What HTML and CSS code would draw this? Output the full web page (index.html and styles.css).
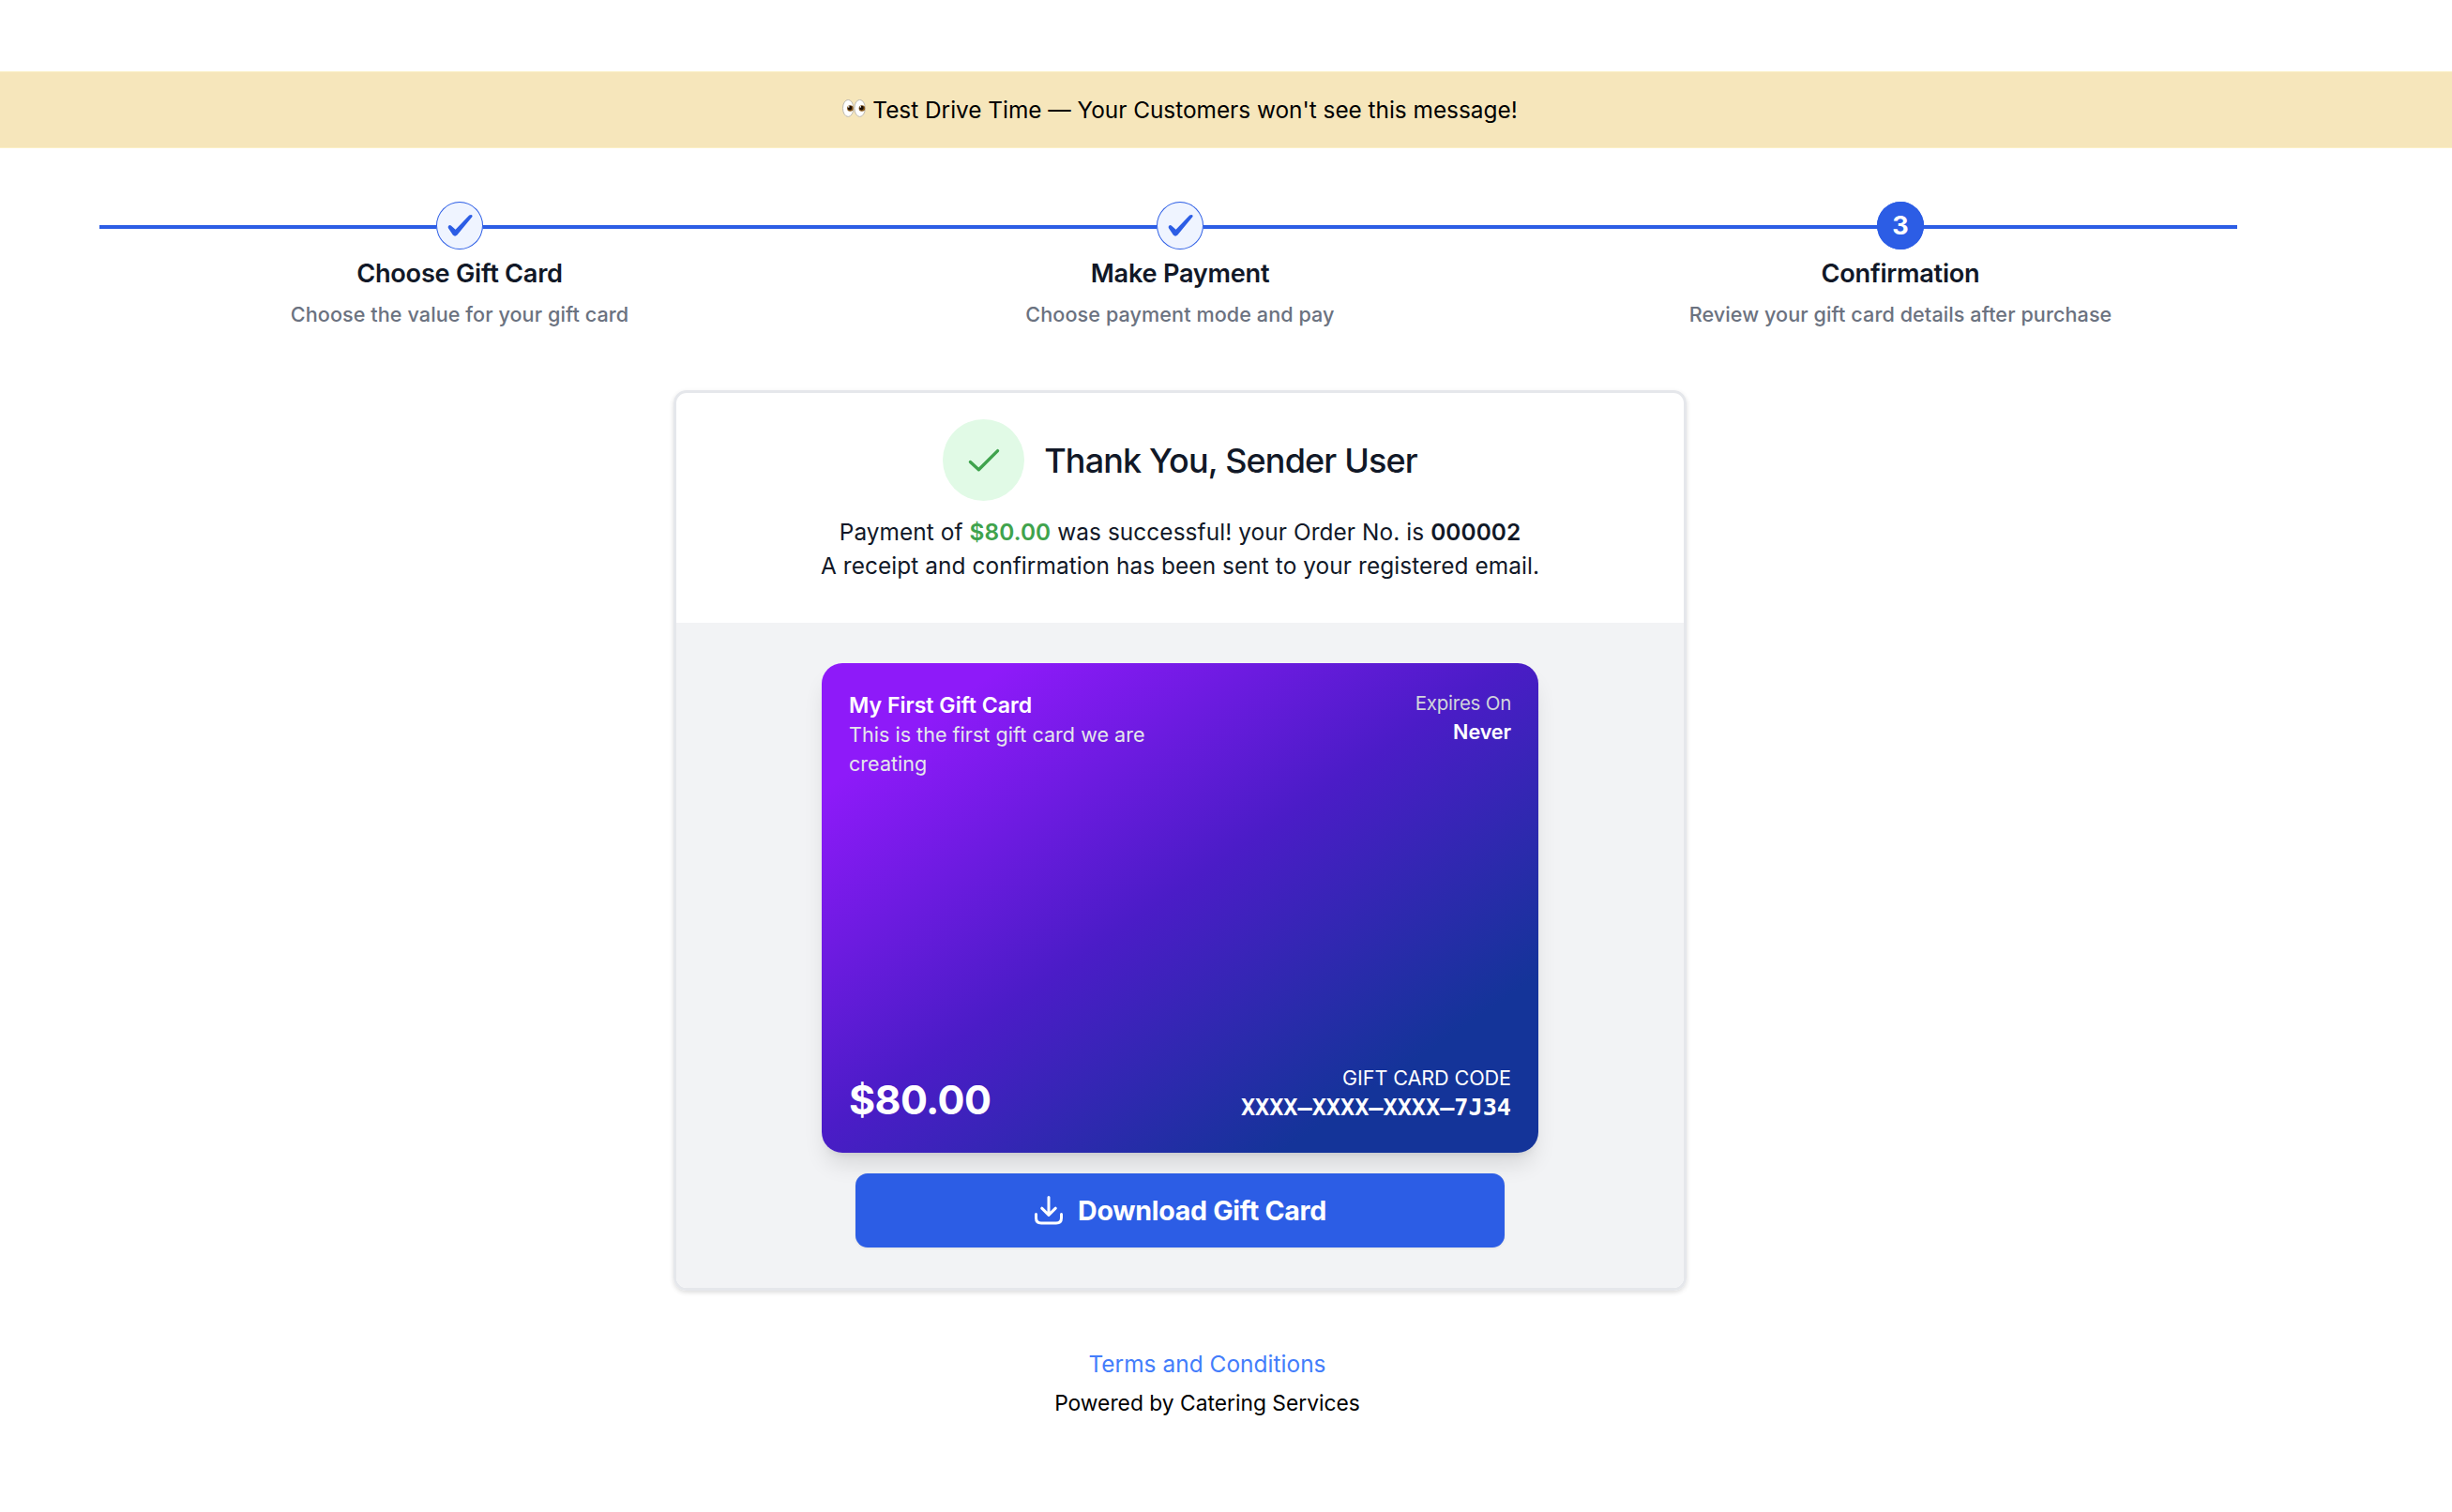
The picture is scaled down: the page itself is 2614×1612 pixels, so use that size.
FILE: index.html
```html
<!DOCTYPE html>
<html lang="en">
<head>
  <meta charset="UTF-8">
  <title>Gift Card - Confirmation</title>
  <link rel="stylesheet" href="styles.css">
</head>
<body>

  <div class="banner">
    <svg class="eyes" viewBox="0 0 26 20">
      <ellipse cx="7.2" cy="9.4" rx="5.7" ry="9" fill="#fff" stroke="#bdb9b2"/>
      <ellipse cx="19.6" cy="9.4" rx="5.7" ry="9" fill="#fff" stroke="#bdb9b2"/>
      <circle cx="9.4" cy="9.5" r="3.3" fill="#8a5a1c"/>
      <circle cx="21.9" cy="9.5" r="3.3" fill="#8a5a1c"/>
      <circle cx="9" cy="9.1" r="2.3" fill="#1c0f08"/>
      <circle cx="21.5" cy="9.1" r="2.3" fill="#1c0f08"/>
      <circle cx="7.8" cy="7.9" r="0.8" fill="#fff"/>
      <circle cx="20.3" cy="7.9" r="0.8" fill="#fff"/>
    </svg>
    <span>Test Drive Time — Your Customers won't see this message!</span>
  </div>

  <main>
    <div class="stepper">
      <div class="step">
        <div class="step-circle">
          <svg viewBox="0 0 50 51"><path d="M13.2 25.8Q14.2 24.4 15.8 25.4L20.6 29.7L35.2 14.6Q36.8 13.4 38.1 14.2Q39 15 38.3 16.2L22.4 35.6Q20 37.8 17.8 35.6L12.8 27.9Q12.4 26.8 13.2 25.8Z"/></svg>
        </div>
        <h3>Choose Gift Card</h3>
        <p>Choose the value for your gift card</p>
      </div>
      <div class="step">
        <div class="step-circle">
          <svg viewBox="0 0 50 51"><path d="M13.2 25.8Q14.2 24.4 15.8 25.4L20.6 29.7L35.2 14.6Q36.8 13.4 38.1 14.2Q39 15 38.3 16.2L22.4 35.6Q20 37.8 17.8 35.6L12.8 27.9Q12.4 26.8 13.2 25.8Z"/></svg>
        </div>
        <h3>Make Payment</h3>
        <p>Choose payment mode and pay</p>
      </div>
      <div class="step">
        <div class="step-circle active">3</div>
        <h3>Confirmation</h3>
        <p>Review your gift card details after purchase</p>
      </div>
    </div>

    <div class="receipt">
      <div class="receipt-top">
        <div class="thanks">
          <div class="success">
            <svg viewBox="0 0 24 24"><path d="M5 12.7l4.3 4L19 7"/></svg>
          </div>
          <h2>Thank You, Sender User</h2>
        </div>
        <p>Payment of <b class="amount">$80.00</b> was successful! your Order No. is <b>000002</b></p>
        <p>A receipt and confirmation has been sent to your registered email.</p>
      </div>

      <div class="receipt-bottom">
        <div class="gift-card">
          <div class="gift-row">
            <div class="gift-info">
              <h4>My First Gift Card</h4>
              <p>This is the first gift card we are creating</p>
            </div>
            <div class="gift-expiry">
              <div class="label">Expires On</div>
              <div class="value">Never</div>
            </div>
          </div>
          <div class="gift-row bottom">
            <div class="gift-value">$80.00</div>
            <div class="gift-code">
              <div class="label">GIFT CARD CODE</div>
              <div class="code">XXXX–XXXX–XXXX–7J34</div>
            </div>
          </div>
        </div>

        <button class="download">
          <svg viewBox="0 0 32 32"><path d="M16 2.5V21M8.7 14.2L16 21.3L23.3 14.2M2.5 20.5V24.5Q2.5 30 8 30H24Q29.5 30 29.5 24.5V20.5"/></svg>
          <span>Download Gift Card</span>
        </button>
      </div>
    </div>
  </main>

  <footer>
    <a href="#">Terms and Conditions</a>
    <p>Powered by Catering Services</p>
  </footer>

</body>
</html>
```
FILE: styles.css
```css
* {
  box-sizing: border-box;
}
body {
  margin: 0;
  padding-top: 76px;
  font-family: Inter, "Liberation Sans", sans-serif;
  background-color: #fff;
  color: #111827;
}
h2, h3, h4, p {
  margin: 0;
}
b {
  font-weight: 600;
}

.banner {
  display: flex;
  justify-content: center;
  align-items: center;
  gap: 7px;
  height: 82px;
  padding-right: 99px;
  background-color: #f6e6bb;
  border-top: 1px solid #fbf0c5;
  border-bottom: 1px solid #fbf0c5;
  color: #000;
  font-size: 24.4px;
  letter-spacing: -0.02px;
}
.eyes {
  width: 26px;
  height: 20px;
  margin-bottom: 3px;
}

main {
  width: 2516px;
  padding-top: 57px;
}
.stepper {
  position: relative;
  display: grid;
  grid-template-columns: repeat(3, 768px);
  margin-left: 106px;
  height: 144px;
}
/* line behind the step circles */
.stepper::before {
  content: "";
  position: absolute;
  top: 25px;
  left: 0;
  width: 2279px;
  height: 4px;
  background-color: #2c5de5;
}
.step {
  position: relative;
  display: flex;
  flex-direction: column;
  align-items: center;
}
.step-circle {
  width: 50px;
  height: 51px;
  border-radius: 50%;
  background-color: #eff4ff;
  box-shadow: inset 0 0 0 1px #2c5de5;
}
.step-circle svg {
  display: block;
  width: 50px;
  height: 51px;
  fill: #2c5de5;
}
.step-circle.active {
  background-color: #2c5de5;
  color: #fff;
  font-size: 27px;
  font-weight: 700;
  line-height: 51px;
  text-align: center;
}
.step h3 {
  margin-top: 9px;
  font-size: 27.2px;
  font-weight: 600;
  letter-spacing: -0.27px;
  line-height: 34px;
}
.step p {
  margin-top: 10px;
  color: #6b7280;
  font-size: 21.6px;
  font-weight: 500;
  letter-spacing: 0.08px;
  line-height: 32px;
}

.receipt {
  width: 1080px;
  height: 960px;
  margin: 57px auto 0;
  border: 3px solid #e5e7eb;
  border-radius: 14px;
  box-shadow: 0 2px 5px rgba(0, 0, 0, 0.14);
  overflow: hidden;
}
.receipt-top {
  height: 245px;
  padding-top: 28px;
  text-align: center;
}
.thanks {
  display: flex;
  justify-content: center;
  align-items: center;
  gap: 21px;
  margin-bottom: 15px;
}
.success {
  display: flex;
  justify-content: center;
  align-items: center;
  width: 87px;
  height: 87px;
  border-radius: 50%;
  background-color: #e1fae6;
}
.success svg {
  width: 50px;
  height: 50px;
  fill: none;
  stroke: #3fa34d;
  stroke-width: 1.6;
  stroke-linecap: round;
  stroke-linejoin: round;
}
.thanks h2 {
  font-size: 36px;
  font-weight: 500;
  letter-spacing: -0.86px;
}
.receipt-top p {
  font-size: 24.4px;
  letter-spacing: 0.08px;
  line-height: 36px;
}
.amount {
  color: #3fa34d;
}

.receipt-bottom {
  display: flex;
  flex-direction: column;
  align-items: center;
  height: 709px;
  padding-top: 43px;
  background-color: #f2f3f5;
}
.gift-card {
  display: flex;
  flex-direction: column;
  justify-content: space-between;
  width: 764px;
  height: 522px;
  padding: 29px 29px 32px;
  border-radius: 22px;
  background-image: linear-gradient(to bottom right, #8e1af9 13%, #4b1cc7 48%, #143499 82%);
  box-shadow: 0 16px 24px -5px rgba(0, 0, 0, 0.12), 0 6px 9px -6px rgba(0, 0, 0, 0.12);
  color: #fff;
}
.gift-row {
  display: flex;
  justify-content: space-between;
}
.gift-row.bottom {
  align-items: flex-end;
}
.gift-info {
  width: 350px;
}
.gift-info h4 {
  padding-top: 1px;
  font-size: 23.1px;
  font-weight: 600;
  line-height: 31px;
}
.gift-info p {
  color: #e5e7eb;
  font-size: 21.5px;
  letter-spacing: 0.04px;
  line-height: 31px;
}
.gift-expiry, .gift-code {
  text-align: right;
}
.gift-expiry .label {
  color: #d1d5db;
  font-size: 20.5px;
  letter-spacing: -0.25px;
  line-height: 28px;
}
.gift-expiry .value {
  font-size: 21.6px;
  font-weight: 600;
  letter-spacing: -0.1px;
  line-height: 33px;
}
.gift-value {
  font-size: 43px;
  font-weight: 700;
  letter-spacing: -0.6px;
  line-height: 50px;
}
.gift-code .label {
  font-size: 21.6px;
  letter-spacing: -0.1px;
  line-height: 31px;
}
.code {
  font-family: "DejaVu Sans Mono", "Liberation Mono", monospace;
  font-size: 25.2px;
  font-weight: 700;
  line-height: 32px;
}

.download {
  display: flex;
  justify-content: center;
  align-items: center;
  gap: 15px;
  width: 692px;
  height: 79px;
  margin-top: 22px;
  padding: 0;
  border: none;
  border-radius: 13px;
  background-color: #2c5de5;
  box-shadow: 0 1px 3px rgba(0, 0, 0, 0.08);
  color: #fff;
  font-family: inherit;
  font-size: 28.6px;
  font-weight: 700;
  letter-spacing: -0.3px;
}
.download svg {
  width: 32px;
  height: 32px;
  margin-top: -1px;
  fill: none;
  stroke: #fff;
  stroke-width: 3;
  stroke-linecap: round;
  stroke-linejoin: round;
}

footer {
  width: 2574px;
  padding-top: 58px;
  text-align: center;
  color: #000;
}
footer a {
  display: block;
  color: #437dfb;
  font-size: 24.4px;
  letter-spacing: 0.05px;
  line-height: 40px;
  text-decoration: none;
}
footer p {
  padding-top: 1px;
  font-size: 22.8px;
  line-height: 42px;
}
```
